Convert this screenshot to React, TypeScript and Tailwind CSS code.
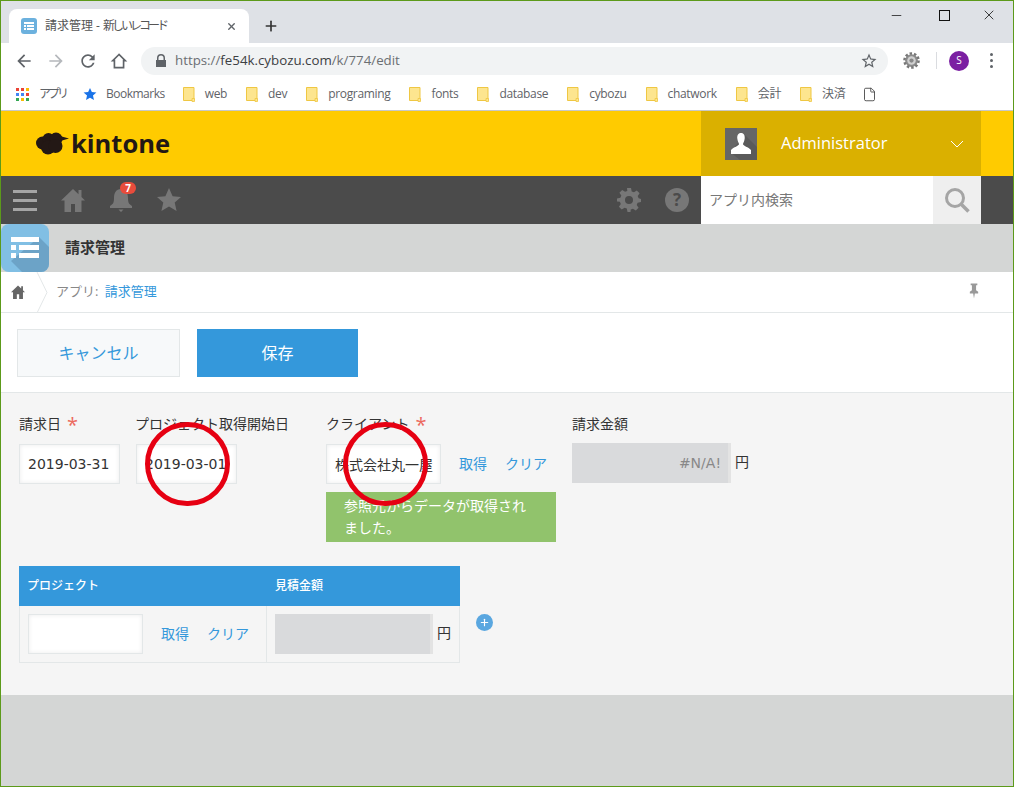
import { Plus, X, Minus, File } from "lucide-react";

const bookmarks = ["web", "dev", "programing", "fonts", "database", "cybozu", "chatwork", "会計", "決済"];

function Folder() {
  return (
    <svg width="12" height="15" viewBox="0 0 12 15" className="mr-[10px] shrink-0">
      <path d="M.5.5h10.500v13H.5z" fill="#fde58f" stroke="#efc743" />
      <path d="M9 11.500h2.500v3H9z" fill="#fde58f" stroke="#efc743" strokeWidth="0.8" />
    </svg>
  );
}

function AppsGrid() {
  const colors = ["#ea4335", "#ea4335", "#fbbc04", "#4285f4", "#4285f4", "#ea4335", "#34a853", "#fbbc04", "#34a853"];
  return (
    <div className="grid grid-cols-3 gap-[2px] w-[13px] shrink-0">
      {colors.map((c, i) => (
        <span key={i} className="w-[3px] h-[3px]" style={{ background: c }} />
      ))}
    </div>
  );
}

function ChromeBar() {
  return (
    <div className="shrink-0">
      <div className="h-[42px] bg-[#dee1e6] flex items-end pl-2 relative">
        <div className="w-[240px] h-[34px] bg-white rounded-t-[8px] flex items-center pl-[12px] pr-[12px]">
          <svg width="16" height="16" viewBox="0 0 16 16" className="mr-[8px] shrink-0">
            <rect width="16" height="16" rx="3" fill="#6cb1de" />
            <path d="M3 4h10v2H3zM3 7h2v2H3zM6 7h7v2H6zM3 10h2v2H3zM6 10h7v2H6z" fill="#fff" />
          </svg>
          <span className="text-[12px] text-[#555] flex-1 whitespace-nowrap">請求管理 - <span className="tracking-[-3px]">新しいレコード</span></span>
          <X size={11} strokeWidth={3} className="text-[#5f6368]" />
        </div>
        <Plus size={16} strokeWidth={2.5} className="text-[#333] ml-[14px] mb-[9px]" />
        <div className="ml-auto self-start flex items-center h-[28px] text-[#111]">
          <Minus size={15} strokeWidth={1.2} className="mr-[35px]" />
          <span className="w-[11px] h-[11px] border border-[#111] mr-[31px]" />
          <X size={16} strokeWidth={1.2} className="mr-[16px]" />
        </div>
      </div>
      <div className="h-[35px] bg-white flex items-center pl-[13px] pr-[13px]">
        <svg width="20" height="20" viewBox="0 0 24 24" fill="#5f6368" className="mr-[12px]"><path d="M20 11H7.830l5.590-5.590L12 4l-8 8 8 8 1.410-1.410L7.830 13H20v-2z" /></svg>
        <svg width="20" height="20" viewBox="0 0 24 24" fill="#b5b8bc" className="mr-[12px]"><path d="M12 4l-1.410 1.410L16.170 11H4v2h12.170l-5.580 5.590L12 20l8-8z" /></svg>
        <svg width="20" height="20" viewBox="0 0 24 24" fill="#5f6368" className="mr-[11px]"><path d="M17.650 6.350C16.200 4.900 14.210 4 12 4c-4.420 0-7.990 3.580-7.990 8s3.570 8 7.990 8c3.730 0 6.840-2.550 7.730-6h-2.080c-.82 2.330-3.040 4-5.650 4-3.310 0-6-2.690-6-6s2.690-6 6-6c1.660 0 3.140.69 4.220 1.780L13 11h7V4l-2.350 2.350z" /></svg>
        <svg width="20" height="20" viewBox="0 0 24 24" fill="none" stroke="#5f6368" strokeWidth="2" className="mr-[12px]"><path d="M12 4.200L4.500 11.500H6.500V20H17.500V11.500H19.500z" /></svg>
        <div className="w-[747px] h-[28px] rounded-full bg-[#f1f3f4] flex items-center pl-[14px] pr-[10px]">
          <svg width="12" height="14" viewBox="0 0 12 14" fill="#5f6368" className="mr-[8px]"><path d="M2 6V4a4 4 0 0 1 8 0v2h1v7H1V6zm1.500 0h5V4a2.500 2.500 0 0 0-5 0z" /></svg>
          <span className="text-[13.3px] text-[#6b6f73]">https://<span className="text-[#3c4043]">fe54k.cybozu.com</span>/k/774/edit</span>
          <svg width="18" height="18" viewBox="0 0 24 24" fill="#5f6368" className="ml-auto"><path d="M22 9.240l-7.190-.62L12 2 9.190 8.630 2 9.240l5.460 4.730L5.820 21 12 17.270 18.180 21l-1.630-7.030L22 9.240zM12 15.400l-3.760 2.270 1-4.280-3.320-2.880 4.380-.38L12 6.100l1.710 4.040 4.380.38-3.320 2.880 1 4.280L12 15.400z" /></svg>
        </div>
        <svg width="17" height="17" viewBox="0 0 24 24" className="ml-[15px]">
          <circle cx="12" cy="12" r="9" fill="#8b8b8b" />
          <circle cx="12" cy="12" r="10" fill="none" stroke="#777" strokeWidth="3.500" strokeDasharray="3.500 2.800" />
          <circle cx="12" cy="12" r="6" fill="#d0d0d0" />
          <circle cx="12" cy="12" r="3" fill="#888" />
        </svg>
        <span className="w-px h-[17px] bg-[#dadce0] ml-[16px]" />
        <span className="w-5 h-5 rounded-full bg-[#7b1fa2] text-white text-[10px] flex items-center justify-center ml-[12px]">S</span>
        <div className="flex flex-col gap-[3px] ml-[21px]">
          <span className="w-[3px] h-[3px] rounded-full bg-[#5f6368]" />
          <span className="w-[3px] h-[3px] rounded-full bg-[#5f6368]" />
          <span className="w-[3px] h-[3px] rounded-full bg-[#5f6368]" />
        </div>
      </div>
      <div className="h-[33px] bg-white flex items-center pl-[15px] text-[12px] text-[#5f6368] whitespace-nowrap tracking-[-0.33px] border-b border-[#c8c8c8]">
        <AppsGrid />
        <span className="ml-[10px] tracking-[-3px]">アプリ</span>
        <svg width="14" height="14" viewBox="0 0 24 24" fill="#1a73e8" className="ml-[17px] mr-[9px]"><path d="M12 1.500l3.200 7.200 7.800.8-5.900 5.200 1.700 7.700L12 18.400l-6.800 4 1.700-7.700L1 9.500l7.800-.8z" /></svg>
        <span className="mr-[18px] tracking-[-0.5px]">Bookmarks</span>
        <div className="flex items-center gap-[19px]">
          {bookmarks.map((b) => (
            <div key={b} className="flex items-center">
              <Folder />
              <span>{b}</span>
            </div>
          ))}
          <File size={15} strokeWidth={1.4} className="text-[#444] -ml-[2px]" />
        </div>
      </div>
    </div>
  );
}

function KintoneHeader() {
  return (
    <div className="h-[65px] bg-[#ffcb00] flex items-stretch shrink-0">
      <div className="w-[700px] flex items-center pl-[35px]">
        <svg width="33" height="23" viewBox="0 0 33 23" fill="#231815" className="mr-[2px]">
          <circle cx="6.500" cy="11" r="6.500" />
          <circle cx="12.500" cy="7" r="6" />
          <circle cx="20" cy="7" r="6.500" />
          <circle cx="12" cy="15.500" r="7" />
          <circle cx="19.500" cy="14" r="7" />
          <path d="M22 3.500l11 3-7 2z" />
        </svg>
        <span className="text-[25.500px] font-bold text-[#231815] font-['Open_Sans',sans-serif] leading-none">kintone</span>
      </div>
      <div className="w-[280px] bg-[#dab000] flex items-center pl-[24px] pr-[17px]">
        <svg width="32" height="32" viewBox="0 0 32 32" className="shrink-0">
          <rect width="32" height="32" fill="#666" />
          <path d="M20 7l12 12v13H15L5 24z" fill="#5a5a5a" />
          <path d="M16 5c3 0 4 2.500 3.700 5.500C19.400 13 18.500 14.500 18 16c0 2 5.500 3 8 6v4H6v-4c2.500-3 8-4 8-6-.5-1.500-1.400-3-1.700-5.500C12 7.500 13 5 16 5z" fill="#fff" />
        </svg>
        <span className="text-[16.5px] text-white ml-[24px]">Administrator</span>
        <svg width="14" height="8" viewBox="0 0 14 8" fill="none" stroke="#fff" className="ml-auto"><path d="M1 1l6 6 6-6" /></svg>
      </div>
    </div>
  );
}

function NavBar() {
  return (
    <div className="h-[48px] bg-[#4b4b4b] flex items-center shrink-0">
      <div className="w-[700px] flex items-center pl-[12px]">
        <div className="flex flex-col gap-[6px] w-[24px]">
          <span className="h-[3px] bg-[#a5a5a5]" />
          <span className="h-[3px] bg-[#a5a5a5]" />
          <span className="h-[3px] bg-[#a5a5a5]" />
        </div>
        <svg width="24" height="24" viewBox="0 0 24 24" fill="#777" className="ml-[24px]"><path d="M12 1L0 12.500h3.500V24h6.500v-8h4v8h6.500V12.500H24l-3.500-3.400V2h-3v4.200z" /></svg>
        <div className="relative ml-[24px] w-[24px] h-[26px]">
          <svg width="24" height="26" viewBox="0 0 24 26" fill="#777"><path d="M12 2c5 0 7 4 7 9 0 5 1 6 4 8v2H1v-2c3-2 4-3 4-8 0-5 2-9 7-9zM9.500 22.500h5L12 25z" /></svg>
          <span className="absolute -top-[5px] left-[11px] w-4 h-[12px] rounded-full bg-[#e74c3c] text-white text-[10px] font-bold leading-[12px] text-center">7</span>
        </div>
        <svg width="24" height="24" viewBox="0 0 24 24" fill="#777" className="ml-[24px]"><path d="M12 0l3.600 8.200 8.400.8-6.300 5.600 1.900 8.400L12 18.500 4.400 23l1.900-8.400L0 9l8.400-.8z" /></svg>
        <svg width="24" height="24" viewBox="0 0 24 24" fill="#777" className="ml-auto"><path fillRule="evenodd" d="M10 0h4l.7 3.400 2.200.9L19.800 2.400l2.800 2.800-1.900 2.900.9 2.200L24 11v3l-3.400.7-.9 2.200 1.900 2.900-2.800 2.800-2.900-1.900-2.200.9L13.500 24h-3l-.7-3.400-2.200-.9-2.900 1.900-2.800-2.800 1.900-2.900-.9-2.200L0 13.500v-3l3.400-.7.9-2.200L2.400 4.700l2.800-2.800 2.900 1.900 2.200-.9zM12 8a4 4 0 1 0 0 8 4 4 0 0 0 0-8z" /></svg>
        <div className="w-[24px] h-[24px] rounded-full bg-[#777] text-[#4b4b4b] text-[17px] font-bold flex items-center justify-center ml-[24px] mr-[12px]">?</div>
      </div>
      <div className="w-[232px] h-[48px] bg-white flex items-center pl-[8px] pb-[1px] text-[14px] text-[#777]">アプリ内検索</div>
      <div className="w-[48px] h-[48px] bg-[#efefef] flex items-center justify-center">
        <svg width="26" height="26" viewBox="0 0 26 26" fill="none" stroke="#a5a5a5"><circle cx="11" cy="11" r="8.500" strokeWidth="3" /><path d="M17 17l7.500 7.500" strokeWidth="3.500" /></svg>
      </div>
    </div>
  );
}

function TitleBar() {
  return (
    <div className="h-[48px] bg-[#d4d6d5] flex items-center shrink-0">
      <svg width="48" height="48" viewBox="0 0 48 48" className="shrink-0">
        <rect width="48" height="48" rx="8" fill="#81bfe4" />
        <path d="M38 13l10 10v17a8 8 0 0 1-8 8H21L10 37z" fill="#6ca3c7" />
        <path d="M10 13h28v5H10zM10 21h5v5h-5zM18 21h20v5H18zM10 29h5v5h-5zM18 29h20v5H18z" fill="#fff" />
      </svg>
      <span className="ml-[16px] mb-[1px] text-[15px] font-bold text-[#333]">請求管理</span>
    </div>
  );
}

function Breadcrumb() {
  return (
    <div className="h-[41px] bg-white border-b border-[#e3e7e8] flex items-center shrink-0 text-[13px]">
      <svg width="14" height="14" viewBox="0 0 24 24" fill="#666" className="ml-[10px]"><path d="M12 1L0 12.500h3.500V24h6.500v-8h4v8h6.500V12.500H24l-3.500-3.400V2h-3v4.200z" /></svg>
      <svg width="12" height="41" viewBox="0 0 12 41" fill="none" stroke="#e3e7e8" className="ml-[11px]"><path d="M1 0l10 20.500L1 41" /></svg>
      <span className="ml-[8px] text-[#888]">アプリ: <span className="text-[#3498db] ml-[3px]">請求管理</span></span>
      <svg width="10" height="18" viewBox="0 0 12 18" fill="#999" className="ml-auto mr-[34px] mb-[3px]"><path d="M2 0h8v2H8.500v6L11 10v2H7l-1 6-1-6H1v-2l2.500-2V2H2z" /></svg>
    </div>
  );
}

function Actions() {
  return (
    <div className="h-[80px] bg-white border-b border-[#e3e7e8] flex items-start pt-[16px] pl-[16px] gap-[17px] shrink-0">
      <button className="w-[163px] h-[48px] bg-[#f7f9fa] border border-[#e3e7e8] text-[#3498db] text-[16px]">キャンセル</button>
      <button className="w-[161px] h-[48px] bg-[#3498db] text-white text-[16px]">保存</button>
    </div>
  );
}

function Label({ text, required }: { text: string; required?: boolean }) {
  return (
    <div className="h-[22px] flex items-center text-[14px] text-[#333] whitespace-nowrap">
      {text}
      {required && <span className="text-[#ec6a5e] text-[20px] ml-[6px] leading-none mt-[3px]">*</span>}
    </div>
  );
}

function Field({ value, w }: { value?: string; w: string }) {
  return (
    <div className={"h-[40px] bg-white border border-[#e3e7e8] shadow-[inset_0_0_4px_rgba(55,61,67,0.1)] flex items-center pl-[8px] overflow-hidden whitespace-nowrap text-[14px] text-[#333] " + w}>
      {value}
    </div>
  );
}

function Form() {
  return (
    <div className="h-[302px] bg-[#f5f5f5] pl-[18px] pt-[19px] shrink-0">
      <div className="flex items-start h-[154px]">
        <div className="w-[117px]">
          <Label text="請求日" required />
          <div className="mt-[10px] font-['DejaVu_Sans',sans-serif]"><Field value="2019-03-31" w="w-[101px]" /></div>
        </div>
        <div className="w-[190px]">
          <div className="-ml-[1px]"><Label text="プロジェクト取得開始日" /></div>
          <div className="mt-[10px] font-['DejaVu_Sans',sans-serif]"><Field value="2019-03-01" w="w-[101px]" /></div>
        </div>
        <div className="w-[246px]">
          <Label text="クライアント" required />
          <div className="mt-[10px] flex items-center">
            <Field value="株式会社丸一屋" w="w-[115px]" />
            <span className="text-[14px] text-[#3498db] ml-[18px] -mt-[1px]">取得</span>
            <span className="text-[14px] text-[#3498db] ml-[18px] -mt-[1px]">クリア</span>
          </div>
          <div className="w-[230px] h-[50px] mt-[8px] bg-[#91c36c] text-white text-[14px] leading-[22px] pl-[18px] pr-[20px] pt-[3px]">参照元からデータが取得されました。</div>
        </div>
        <div>
          <Label text="請求金額" />
          <div className="mt-[9px] flex items-center">
            <div className="w-[159px] h-[40px] bg-[#d9dadc] border-r-[3px] border-[#e3e3e3] flex items-center justify-end pr-[7px] text-[14px] text-[#888] font-['DejaVu_Sans',sans-serif]">#N/A!</div>
            <span className="text-[14px] text-[#333] ml-[4px] -mt-[3px]">円</span>
          </div>
        </div>
      </div>
      <div className="flex items-start">
        <div className="w-[441px]">
          <div className="h-[40px] bg-[#3498db] flex items-center text-white text-[12px] font-medium">
            <div className="w-[248px] pl-[8px]">プロジェクト</div>
            <div className="pl-[8px]">見積金額</div>
          </div>
          <div className="h-[57px] flex border border-t-0 border-[#e3e7e8]">
            <div className="w-[247px] border-r border-[#e3e7e8] flex items-center pl-[8px]">
              <Field w="w-[115px]" />
              <span className="text-[14px] text-[#3498db] ml-[18px] -mt-[2px]">取得</span>
              <span className="text-[14px] text-[#3498db] ml-[18px] -mt-[2px]">クリア</span>
            </div>
            <div className="flex items-center pl-[8px]">
              <div className="w-[158px] h-[40px] bg-[#d9dadc] border-r-[3px] border-[#e3e3e3]" />
              <span className="text-[14px] text-[#333] ml-[4px] -mt-[3px]">円</span>
            </div>
          </div>
        </div>
        <div className="w-[17px] h-[17px] rounded-full bg-[#5aa7e0] ml-[16px] mt-[48px] flex items-center justify-center">
          <Plus size={11} strokeWidth={2.5} className="text-white" />
        </div>
      </div>
    </div>
  );
}

export default function App() {
  return (
    <div className="w-[1014px] h-[787px] relative overflow-hidden border border-[#5c9a1a] bg-[#d4d6d5] flex flex-col font-['Open_Sans','Noto_Sans_CJK_JP',sans-serif]">
      <ChromeBar />
      <KintoneHeader />
      <NavBar />
      <TitleBar />
      <Breadcrumb />
      <Actions />
      <Form />
      {/* hand-drawn red marks over the fields */}
      <div className="absolute left-[144px] top-[421px] w-[85px] h-[84px] rounded-full border-[5px] border-[#e60012]" />
      <div className="absolute left-[342px] top-[421px] w-[85px] h-[84px] rounded-full border-[5px] border-[#e60012]" />
    </div>
  );
}
